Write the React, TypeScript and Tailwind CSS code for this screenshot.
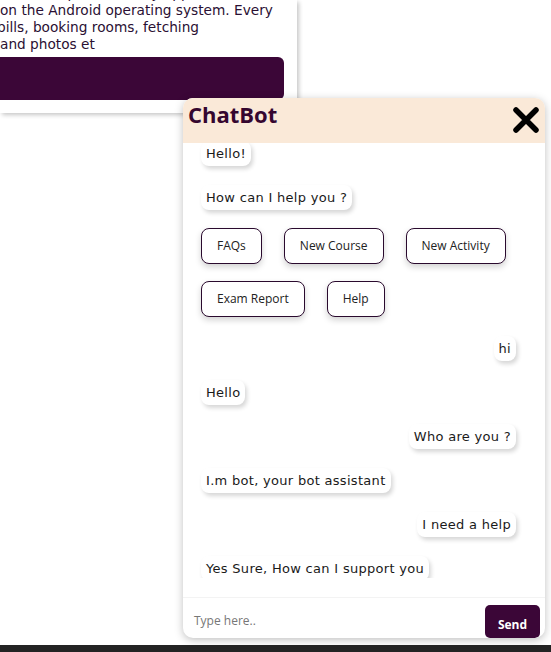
import React from "react";

const Bot = ({ children }: { children: React.ReactNode }) => (
  <div className="self-start rounded-[8px] bg-white px-[5px] py-[5px] text-[13px] leading-[15px] tracking-[0.3px] text-[#1a1a1a] shadow-[2px_3px_4px_rgba(0,0,0,0.16)]">
    {children}
  </div>
);

const User = ({ children }: { children: React.ReactNode }) => (
  <div className="self-end rounded-[8px] bg-white px-[5px] py-[5px] text-[13px] leading-[15px] tracking-[0.3px] text-[#1a1a1a] shadow-[2px_3px_4px_rgba(0,0,0,0.16)]">
    {children}
  </div>
);

const Opt = ({ children }: { children: React.ReactNode }) => (
  <button className="h-[36px] rounded-[8px] border border-[#2a0a2e] bg-white px-[15px] font-['Open_Sans'] text-[12px] text-[#222] shadow-[0_3px_6px_rgba(0,0,0,0.18)]">
    {children}
  </button>
);

export default function App() {
  return (
    <div className="relative flex h-[652px] w-[551px] flex-col overflow-hidden bg-white font-['DejaVu_Sans',sans-serif]">
      {/* background card */}
      <div className="h-[113px] w-[297px] overflow-hidden rounded-br-[4px] bg-white shadow-[2px_2px_4px_rgba(0,0,0,0.22)]">
        <div className="mt-[-15px] text-[13.7px] leading-[17px] text-[#2a1033]">
          <div className="whitespace-nowrap">nd developed for every app</div>
          <div className="whitespace-nowrap">on the Android operating system. Every</div>
          <div className="ml-[-3px] whitespace-nowrap">bills, booking rooms, fetching</div>
          <div className="whitespace-nowrap">and photos et</div>
        </div>
        <div className="mt-[4px] h-[43px] w-[284px] rounded-r-[6px] bg-[#3b0637]" />
      </div>

      <div className="flex-1" />
      <div className="h-[7px] w-full bg-[#232323]" />

      {/* chat widget */}
      <div className="absolute left-[183px] top-[98px] flex h-[540px] w-[362px] flex-col overflow-hidden rounded-[10px] bg-white shadow-[0_2px_8px_rgba(0,0,0,0.25)]">
        <div className="flex h-[45px] shrink-0 items-start justify-between bg-[#fae9d8] pl-[5px] pr-[5px]">
          <span className="pt-[5px] font-['Open_Sans'] text-[22px] font-bold leading-[22px] text-[#35062f]">ChatBot</span>
          <svg width="28" height="28" viewBox="0 0 28 28" className="mt-[8px]">
            <path d="M4 4 L24 24 M24 4 L4 24" stroke="#000" strokeWidth="5.5" strokeLinecap="round" />
          </svg>
        </div>

        <div className="relative flex-1 overflow-hidden">
          <div className="mt-[-2px] flex flex-col gap-[19px] pl-[18px] pr-[29px]">
            <Bot>Hello!</Bot>
            <Bot>How can I help you ?</Bot>
            <div className="-mt-[1px] flex flex-wrap gap-x-[22px] gap-y-[17px]">
              <Opt>FAQs</Opt>
              <Opt>New Course</Opt>
              <Opt>New Activity</Opt>
              <Opt>Exam Report</Opt>
              <Opt>Help</Opt>
            </div>
            <User>hi</User>
            <Bot>Hello</Bot>
            <User>Who are you ?</User>
            <Bot>I.m bot, your bot assistant</Bot>
            <User>I need a help</User>
            <Bot>Yes Sure, How can I support you</Bot>
          </div>
          <div className="absolute bottom-0 left-0 right-0 h-[19px] bg-white" />
        </div>

        <div className="flex h-[41px] shrink-0 items-end justify-between border-t border-[#f3f3f3] pl-[11px] pr-[5px]">
          <span className="mb-[8px] font-['Open_Sans'] text-[12px] text-[#777]">Type here..</span>
          <button className="h-[33px] w-[55px] rounded-[5px] bg-[#3b0637] pt-[6px] font-['Open_Sans'] text-[12px] font-bold text-white">
            Send
          </button>
        </div>
      </div>
    </div>
  );
}
